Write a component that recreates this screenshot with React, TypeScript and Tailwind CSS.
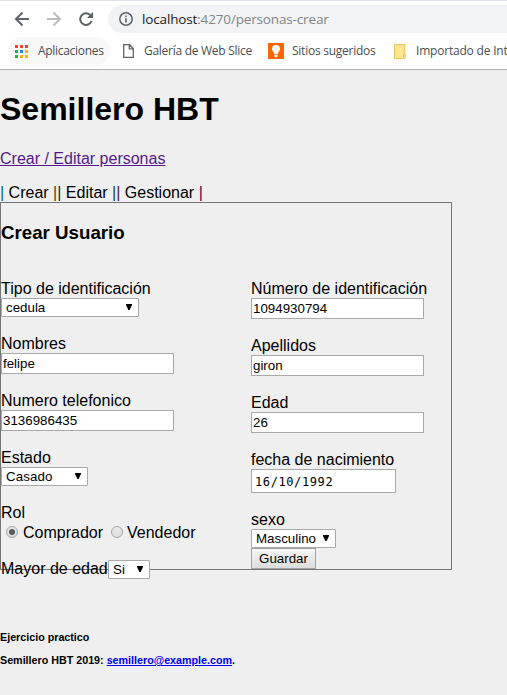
import React from 'react';

const ui = "font-['Open_Sans','Noto_Sans',sans-serif]";

function Field({ label, children }: { label: string; children: React.ReactNode }) {
  return (
    <div className="mb-[18px] flex flex-col items-start">
      <label className="h-[18px] leading-[18px] whitespace-nowrap">{label}</label>
      {children}
    </div>
  );
}

function TextInput({ value }: { value: string }) {
  return (
    <input
      className="block h-[21px] w-[173px] border border-[#a9a9a9] bg-white px-px text-[13.333px] leading-[15px] outline-none"
      defaultValue={value}
    />
  );
}

function Select({ value, width, spacing = '' }: { value: string; width: string; spacing?: string }) {
  return (
    <div className={`flex h-[19px] shrink-0 items-center justify-between rounded-[1px] border border-[#a9a9a9] bg-white pr-[6px] pl-1 ${width}`}>
      <span className={`text-[13.333px] leading-[17px] ${spacing}`}>{value}</span>
      <svg width="6" height="6" viewBox="0 0 6 6" className="mb-px shrink-0">
        <path d="M0 0H6V1L3.6 6H2.4L0 1Z" fill="#000" />
      </svg>
    </div>
  );
}

function Radio({ checked = false }: { checked?: boolean }) {
  return (
    <span className="mb-px flex size-3 shrink-0 items-center justify-center rounded-full border border-[#a5a5a5] bg-linear-to-b from-[#e8e8e8] to-[#dedede]">
      {checked && <span className="size-1.5 rounded-full bg-[#5b5b5b]" />}
    </span>
  );
}

const appColors = [
  '#ea4335', '#ea4335', '#ea4335',
  '#34a853', '#2688eb', '#f9b20a',
  '#34a853', '#f9b20a', '#f9b20a',
];

function Browser() {
  return (
    <header className={`h-[70px] overflow-hidden border-t border-b border-t-[#dee1e6] border-b-[#b3b3b3] bg-white ${ui}`}>
      <div className="mt-1 flex h-7 items-center">
        <svg width="108" height="28" viewBox="0 0 108 28" fill="none" strokeWidth="2" className="shrink-0">
          <path d="M29 14H16.5M22.5 7.5L16 14L22.5 20.5" stroke="#5f6368" />
          <path d="M47 14H59.5M53.5 7.5L60 14L53.5 20.5" stroke="#babcbe" />
          <path d="M90.3 10.2A5.8 5.8 0 1 0 91.5 16" stroke="#5f6368" />
          <path d="M93 7V13H87Z" fill="#5f6368" />
        </svg>
        <div className="flex h-7 flex-1 items-center rounded-l-full bg-[#f1f3f4] pl-[11px]">
          <svg width="14" height="14" viewBox="0 0 14 14" className="shrink-0">
            <circle cx="7" cy="7" r="6.2" fill="none" stroke="#5f6368" strokeWidth="1.5" />
            <path d="M6.2 3.5h1.6v1.6H6.2zM6.2 6.2h1.6v4.3H6.2z" fill="#5f6368" />
          </svg>
          <span className="ml-[9px] text-[13.5px] leading-5 tracking-[-0.15px] whitespace-nowrap text-[#80868b]">
            <span className="text-[#202124]">localhost</span>:4270/personas-crear
          </span>
        </div>
      </div>
      <nav className="mt-1 flex h-7 items-center text-[12px] whitespace-nowrap text-[#4a4d51]">
        <div className="ml-2 flex h-7 w-[102px] shrink-0 items-center rounded-full bg-[#f8f8f8] pl-[7px]">
          <span className="grid grid-cols-3 gap-[2px]">
            {appColors.map((c, i) => (
              <span key={i} className="size-[3px]" style={{ backgroundColor: c }} />
            ))}
          </span>
          <span className="ml-[10px] tracking-[-0.3px]">Aplicaciones</span>
        </div>
        <svg width="11" height="14" viewBox="0 0 11 14" fill="none" stroke="#5f6368" strokeWidth="1.3" className="ml-[13px] shrink-0">
          <path d="M.7.7H6.5L10.3 4.5V13.3H.7ZM6.3.7V4.8H10.3" />
        </svg>
        <span className="ml-[10px] w-[108px] shrink-0 tracking-[-0.28px]">Galería de Web Slice</span>
        <svg width="16" height="16" viewBox="0 0 16 16" className="ml-4 shrink-0">
          <path d="M0 0H16V16H0Z" fill="#ff6500" />
          <path d="M8 2A4 4 0 0 0 4 6C4 8.2 6 8.8 6.2 11H9.8C10 8.8 12 8.2 12 6A4 4 0 0 0 8 2ZM6.4 11.8H9.6V13.2L8.8 14.2H7.2L6.4 13.2Z" fill="#fff" />
        </svg>
        <span className="ml-2 w-[84px] shrink-0 tracking-[-0.25px]">Sitios sugeridos</span>
        <svg width="13" height="15" viewBox="0 0 13 15" className="ml-[18px] shrink-0" fill="#ffe694" stroke="#e9c452">
          <path d="M.5.5H10.5V14.5H.5Z" />
          <path d="M9.5 10.5H11.5V13.5L10.5 14.5H9.5Z" />
        </svg>
        <span className="ml-[9px] shrink-0 tracking-[-0.2px]">Importado de Inte</span>
      </nav>
    </header>
  );
}

export default function App() {
  return (
    <div className="h-[695px] w-[507px] overflow-hidden bg-[#efefef] font-['Liberation_Sans',Arial,sans-serif] text-[16px] text-black">
      <Browser />
      <main>
        <h1 className="pt-[21px] text-[32px] leading-[37px] font-bold">Semillero HBT</h1>
        <a className="mt-[22px] block h-[18px] leading-[18px] text-[#551a8b] underline">Crear / Editar personas</a>
        <p className="mt-4 h-[18px] leading-[18px]">
          <span className="text-[#00688f]">|</span> Crear <span className="text-[#5a3a10]">|</span><span className="text-[#302010]">|</span> Editar <span className="text-[#104060]">|</span><span className="text-[#50104a]">|</span> Gestionar <span className="text-[#5c0048]">|</span>
        </p>
        <section className="h-[368px] w-[452px] border border-[#767676]">
          <h3 className="mt-[19px] h-[21px] text-[18.72px] leading-[21px] font-bold">Crear Usuario</h3>
          <div className="mt-[37px] flex">
            <div className="w-[250px] shrink-0">
              <Field label="Tipo de identificación"><Select value="cedula" width="w-[138px]" /></Field>
              <Field label="Nombres"><TextInput value="felipe" /></Field>
              <Field label="Numero telefonico"><TextInput value="3136986435" /></Field>
              <Field label="Estado"><Select value="Casado" width="w-[87px]" spacing="tracking-[0.1px]" /></Field>
              <Field label="Rol">
                <div className="flex h-5 items-center pl-[5px] leading-5">
                  <Radio checked />
                  <span className="mt-px ml-[5px]">Comprador</span>
                  <span className="ml-2 flex items-center"><Radio /><span className="mt-px ml-1">Vendedor</span></span>
                </div>
              </Field>
              <div className="flex h-[19px] leading-[18px]">
                <span className="w-[107px] shrink-0 whitespace-nowrap">Mayor de edad</span>
                <Select value="Si" width="w-[42px]" />
              </div>
            </div>
            <div>
              <Field label="Número de identificación"><TextInput value="1094930794" /></Field>
              <Field label="Apellidos"><TextInput value="giron" /></Field>
              <Field label="Edad"><TextInput value="26" /></Field>
              <Field label="fecha de nacimiento">
                <input
                  className="h-6 w-[145px] border border-[#a9a9a9] bg-white pt-[2px] pl-[3px] font-['DejaVu_Sans_Mono',monospace] text-[12px] tracking-[0.6px]"
                  defaultValue="16/10/1992"
                />
              </Field>
              <Field label="sexo">
                <Select value="Masculino" width="w-[85px]" />
                <button className="h-[21px] w-[65px] border border-[#a2a2a2] bg-linear-to-b from-[#f6f6f6] to-[#dddddd] text-[13.333px] leading-[19px]">Guardar</button>
              </Field>
            </div>
          </div>
        </section>
      </main>
      <footer className="mt-[61px] text-[10.72px] leading-3 font-bold">
        <p>Ejercicio practico</p>
        <p className="mt-[11px]">Semillero HBT 2019: <a className="text-[#0000ee] underline">semillero@example.com</a>.</p>
      </footer>
    </div>
  );
}
